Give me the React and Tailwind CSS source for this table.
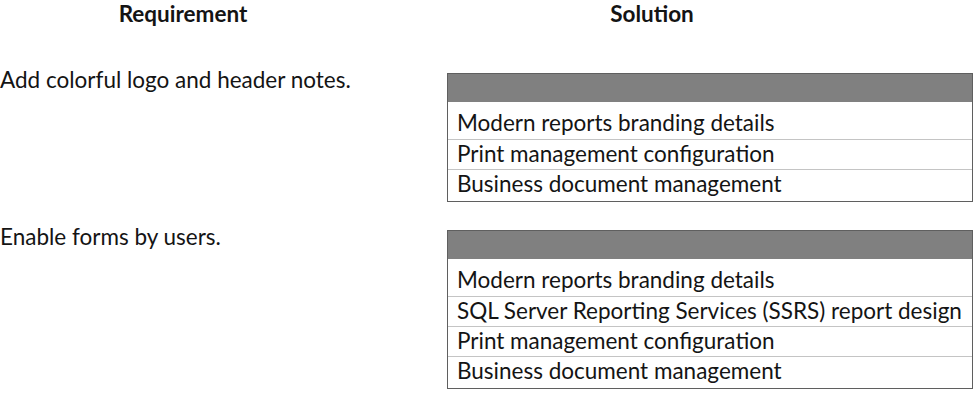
const sections = [
  {
    requirement: "Add colorful logo and header notes.",
    options: [
      "Modern reports branding details",
      "Print management configuration",
      "Business document management",
    ],
  },
  {
    requirement: "Enable forms by users.",
    options: [
      "Modern reports branding details",
      "SQL Server Reporting Services (SSRS) report design",
      "Print management configuration",
      "Business document management",
    ],
  },
];

const OptionBox = ({ options }) => (
  <div className="w-[526px] border border-[#5f5f5f] bg-white">
    <div className="h-[28px] bg-[#808080]" />
    {options.map((opt, i) => {
      let cls = "h-[30px] pl-[9px] flex items-center leading-none border-t border-[#c4c4c4]";
      if (i === 0) cls = "h-[37px] pt-[5px] pl-[9px] flex items-center leading-none";
      else if (i === options.length - 1)
        cls = "h-[32px] pb-[3px] pl-[9px] flex items-center leading-none border-t border-[#c4c4c4]";
      return (
        <div key={i} className={cls}>
          {opt}
        </div>
      );
    })}
  </div>
);

export default function App() {
  return (
    <div
      className="w-[975px] h-[396px] bg-white text-[#141414] text-[22.5px] overflow-hidden"
      style={{ fontFamily: "Lato, 'Open Sans', sans-serif" }}
    >
      <div className="flex h-[27px] leading-[27px] items-center font-bold">
        <div className="w-[366px] text-center">Requirement</div>
        <div className="w-[572px] text-center">Solution</div>
      </div>

      <div className="mt-[41px] flex flex-col gap-[23px]">
        {sections.map((s, i) => (
          <div key={i} className="flex items-start">
            <div className="w-[447px] leading-[24px]">{s.requirement}</div>
            <div className="mt-[5px]">
              <OptionBox options={s.options} />
            </div>
          </div>
        ))}
      </div>
    </div>
  );
}
